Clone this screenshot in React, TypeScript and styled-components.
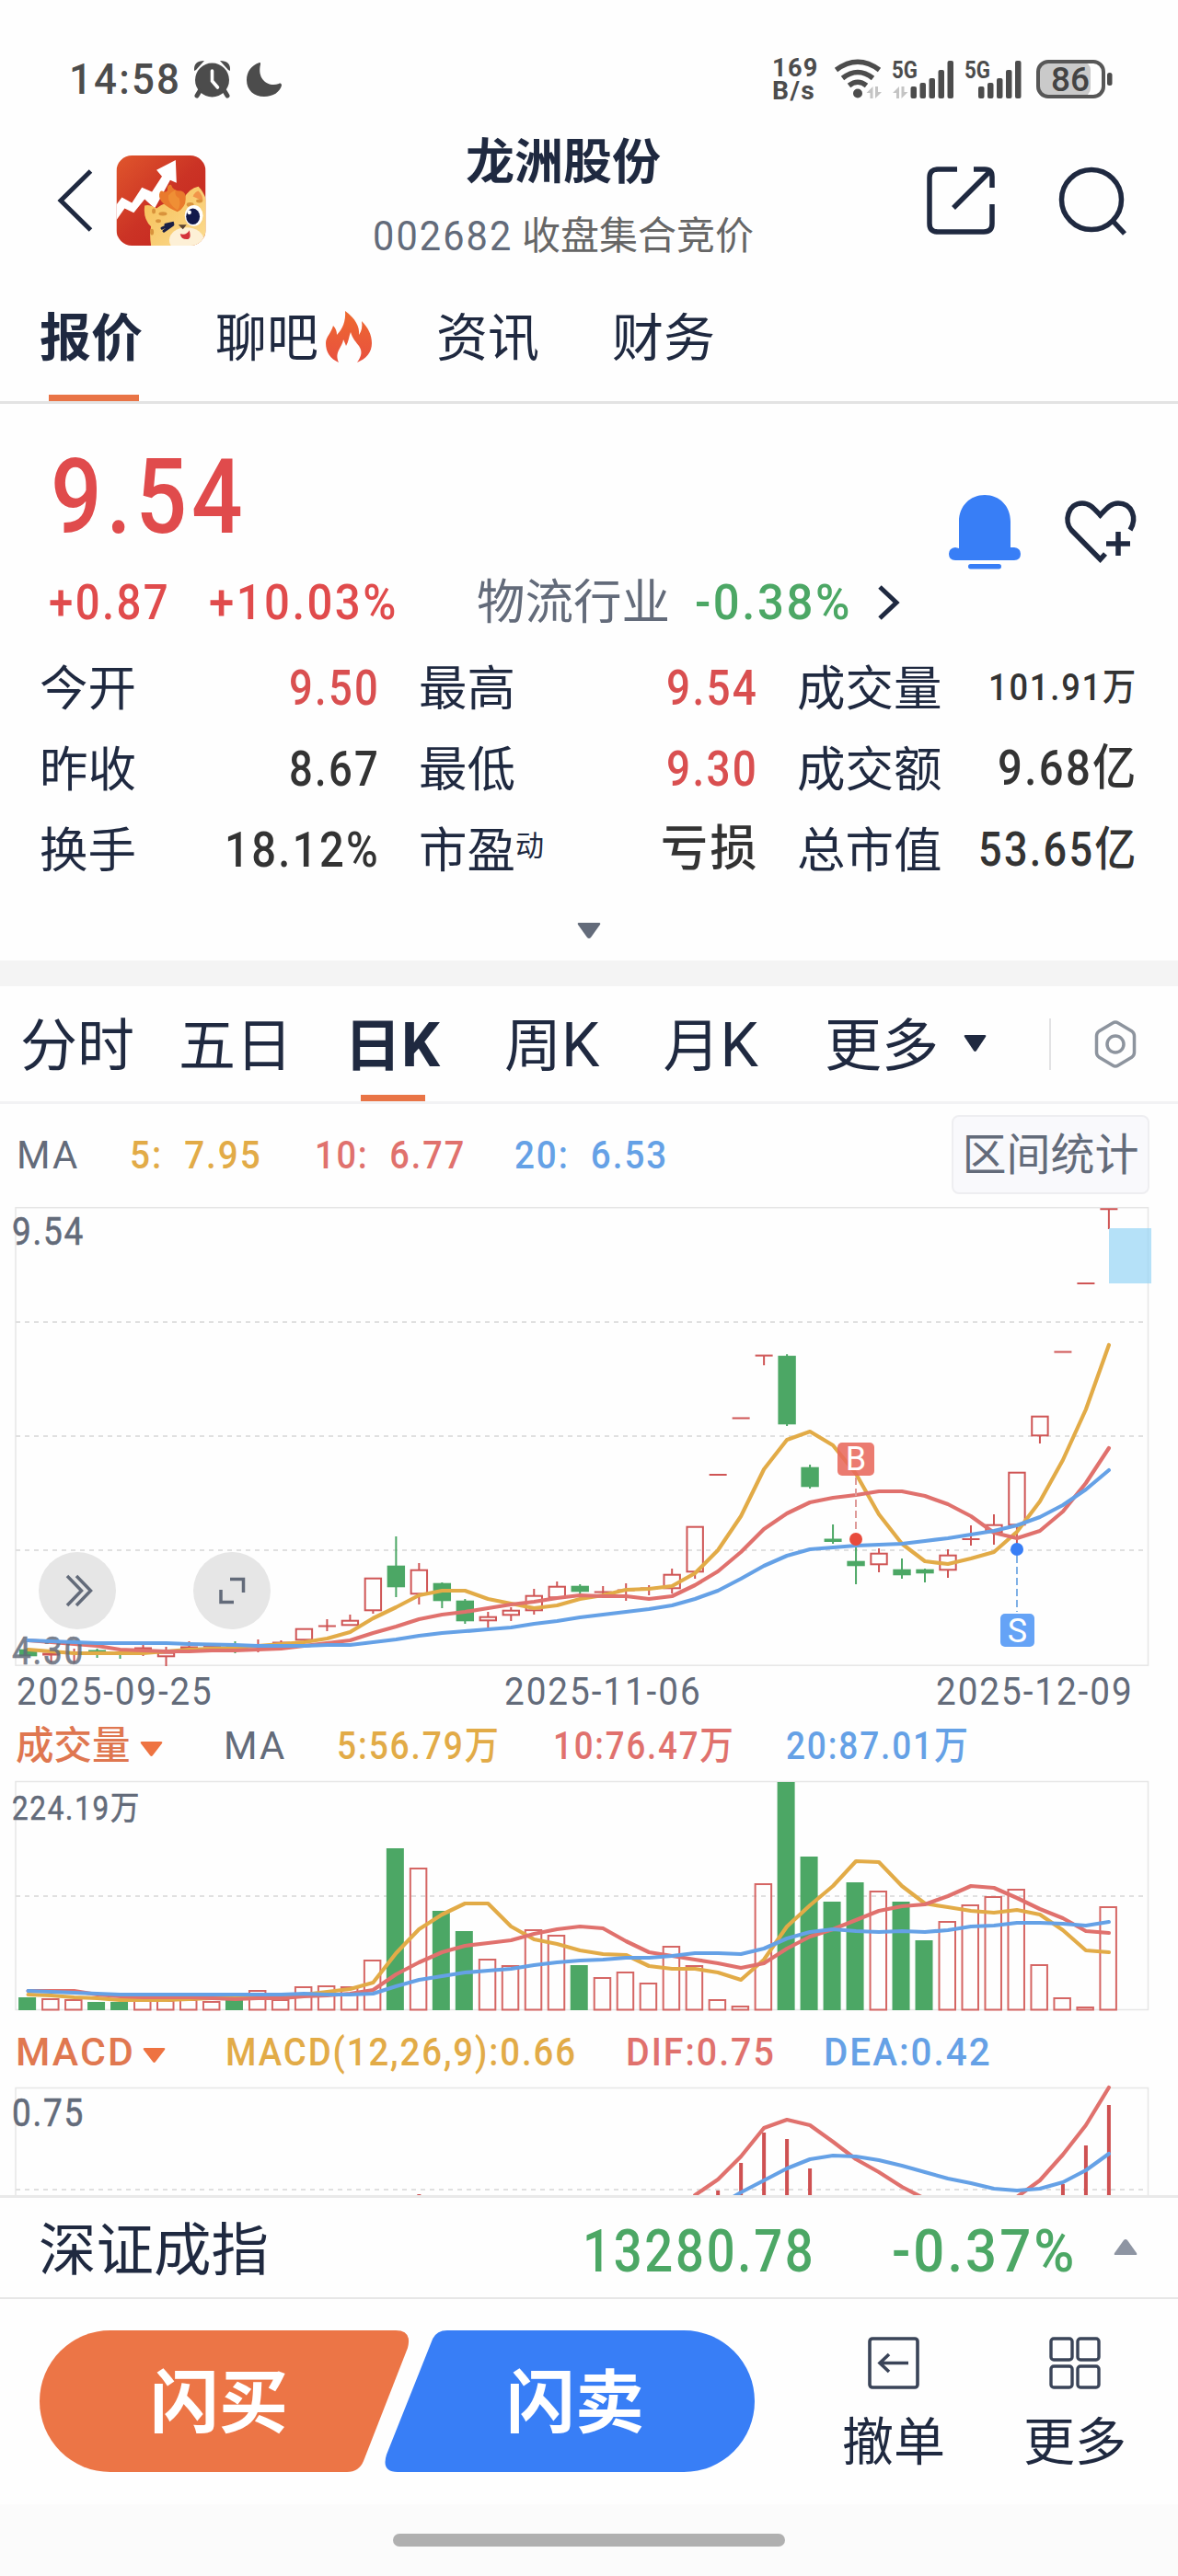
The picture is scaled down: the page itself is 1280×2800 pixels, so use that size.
import React, { useLayoutEffect, useRef, useState } from 'react';
import styled, { createGlobalStyle } from 'styled-components';

const INK = '#1f2940';
const SLATE = '#636b7a';
const RED = '#e04b4c';
const GREEN = '#4ca765';
const ORANGE = '#ec7546';
const BLUE = '#387ef6';
const MA_YELLOW = '#e2ab47';
const MA_RED = '#e0716d';
const MA_BLUE = '#65a1e6';

const GlobalStyle = createGlobalStyle`
  * {
    box-sizing: border-box;
  }

  body {
    margin: 0;
    background: #fefefe;
    color: ${INK};
    font-family: Roboto, 'Noto Sans CJK SC', sans-serif;
  }

  svg {
    display: block;
    flex-shrink: 0;
    overflow: visible;
  }
`;

const Page = styled.div`
  width: 1280px;
  height: 2800px;
  overflow: hidden;
  display: flex;
  flex-direction: column;
  background: #fefefe;

  > * {
    flex-shrink: 0;
  }
`;

const Row = styled.div<{ $h: number; $pt?: number }>`
  display: flex;
  align-items: center;
  height: ${(p) => p.$h}px;
  padding-top: ${(p) => p.$pt || 0}px;
`;

type TextProps = { $size: number; $color?: string; $ml?: number; $weight?: number };

const Text = styled.span<TextProps>`
  margin-left: ${(p) => p.$ml || 0}px;
  font-size: ${(p) => p.$size}px;
  font-weight: ${(p) => p.$weight || 400};
  color: ${(p) => p.$color || INK};
  line-height: 1.2;
  white-space: pre;
`;

const TRACKING = 0.05;

const FigureBox = styled(Text)<{ $w: number }>`
  display: block;
  width: ${(p) => p.$w}px;
  flex-shrink: 0;
`;

const FigureInner = styled.span`
  display: inline-block;
  letter-spacing: ${TRACKING}em;
  transform-origin: left center;
`;

type FigureProps = {
  w: number;
  size: number;
  color?: string;
  ml?: number;
  weight?: number;
  children: string;
};

// Quote figures are condensed so that each one fills its column exactly
const Figure: React.FC<FigureProps> = ({ w, size, color, ml, weight = 500, children }) => {
  const ref = useRef<HTMLSpanElement>(null);
  const [scale, setScale] = useState(1);

  useLayoutEffect(() => {
    if (ref.current) {
      setScale(w / (ref.current.offsetWidth - size * TRACKING));
    }
  }, [w, size, children]);

  return (
    <FigureBox $w={w} $size={size} $color={color} $ml={ml} $weight={weight}>
      <FigureInner ref={ref} style={{ transform: `scaleX(${scale})` }}>{children}</FigureInner>
    </FigureBox>
  );
};

/* ---------- status bar ---------- */

const NetSpeed = styled.div`
  width: 50px;
  margin-left: 532px;

  span {
    line-height: 25px;
  }
`;

const StatusBar = () => (
  <Row $h={134} $pt={38}>
    <Figure w={120} size={47} ml={75} color="#4c4c4c">14:58</Figure>
    <svg width="41" height="42" viewBox="0 0 41 42" style={{ marginLeft: 15 }}>
      <circle cx="20.500" cy="22" r="18.500" fill="#4c4c4c" />
      <path d="M1 12Q0 1 12 1L3 11M40 12Q41 1 29 1L38 11" fill="#4c4c4c" />
      <path d="M7 34l-3 5M34 34l3 5" stroke="#4c4c4c" strokeWidth="5" strokeLinecap="round" />
      <path d="M20.500 12v11l6 7" stroke="#fff" strokeWidth="3.600" fill="none" strokeLinecap="round" />
    </svg>
    <svg width="39" height="39" viewBox="0 0 39 39" style={{ marginLeft: 17 }}>
      <path d="M14 1C5 4 0 11 0 20C0 31 8 38 19 38C29 38 36 33 38 26C38 24 37 23 35 24C24 28 11 20 15 3C15 1 15 1 14 1Z" fill="#4c4c4c" />
    </svg>
    <NetSpeed>
      <Figure w={49} size={28} weight={700} color="#4c4c4c">169</Figure>
      <Figure w={46} size={28} weight={700} color="#4c4c4c">B/s</Figure>
    </NetSpeed>
    <svg width="320" height="60" viewBox="905 56 320 60" style={{ marginLeft: 17 }}>
      <g fill="none" stroke="#4c4c4c" strokeWidth="5.500">
        <path d="M907.500 76Q931 58.500 954.500 76" />
        <path d="M914.500 85Q931 72 947.500 85" />
        <path d="M921.500 93Q931 85.500 940.500 93" />
      </g>
      <circle cx="931" cy="101.500" r="5" fill="#4c4c4c" />
      <g fill="#c4c4c4">
        <path d="M947.500 94v13h-3v-6h-4zM950 107v-13h3v6h4z" />
        <path d="M976 94v13h-3v-6h-4zM978.500 107v-13h3v6h4z" />
      </g>
      <g fill="#4c4c4c">
        <rect x="988.500" y="94" width="6.500" height="13" rx="2" />
        <rect x="998.500" y="90" width="6.500" height="17" rx="2" />
        <rect x="1008.500" y="85" width="6.500" height="22" rx="2" />
        <rect x="1018.500" y="76" width="6.500" height="31" rx="2" />
        <rect x="1028.500" y="66" width="6.500" height="41" rx="2" />
        <rect x="1062" y="94" width="6.500" height="13" rx="2" />
        <rect x="1072" y="90" width="6.500" height="17" rx="2" />
        <rect x="1082" y="85" width="6.500" height="22" rx="2" />
        <rect x="1092" y="76" width="6.500" height="31" rx="2" />
        <rect x="1102" y="66" width="6.500" height="41" rx="2" />
        <rect x="1202" y="79" width="5.500" height="14" rx="2.500" />
        <text x="968" y="85" fontSize="26" fontWeight="700" textLength="28" lengthAdjust="spacingAndGlyphs">5G</text>
        <text x="1047" y="85" fontSize="26" fontWeight="700" textLength="28" lengthAdjust="spacingAndGlyphs">5G</text>
      </g>
      <rect x="1127" y="67" width="57" height="38" rx="9" fill="#cacaca" />
      <rect x="1127" y="67" width="71" height="38" rx="11" fill="none" stroke="#575757" strokeWidth="4" />
      <text x="1141" y="99" fontSize="37" fontWeight="500" fill="#444" textLength="42" lengthAdjust="spacingAndGlyphs">86</text>
    </svg>
  </Row>
);

/* ---------- header ---------- */

const Logo = () => (
  <svg width="98" height="98" viewBox="0 0 98 99" style={{ marginLeft: 24 }}>
    <defs>
      <linearGradient id="logoBg" x1="0" y1="0" x2="1" y2="1">
        <stop offset="0" stopColor="#e0562c" />
        <stop offset="0.500" stopColor="#cb3325" />
        <stop offset="1" stopColor="#c4241f" />
      </linearGradient>
      <linearGradient id="logoFur" x1="0" y1="0" x2="1" y2="1">
        <stop offset="0" stopColor="#f6bd52" />
        <stop offset="1" stopColor="#fbdc92" />
      </linearGradient>
      <clipPath id="logoClip"><rect width="98" height="99" rx="17" /></clipPath>
    </defs>
    <g clipPath="url(#logoClip)">
      <rect width="98" height="99" fill="url(#logoBg)" />
      <path d="M0 54L6 46L17 52L28 35L39 40L50 23L44 16L65 5L66 30L59 27L42 58L31 48L19 63L9 58L0 71Z" fill="#fff" />
      <path d="M31 55Q36 53 44 58Q52 51 74 47Q80 36 90 34Q96 40 99 50V99H38Q36 86 38 78Q29 70 31 55Z" fill="url(#logoFur)" />
      <path d="M84 45Q86 40 90 39Q95 44 95 50Z" fill="#f1954a" />
      <path d="M67 62Q46 53 47 43Q48 37 52 40Q57 40 56 36Q56 32 60 32Q62 39 71 39Q77 41 76 48Q76 57 67 62Z" fill="#e97a2c" />
      <path d="M57 44Q60 40 65 38Q63 44 69 47Q71 56 67 60Q56 53 57 44Z" fill="#ef8f35" />
      <g fill="#d9933c">
        <ellipse cx="41" cy="61" rx="2" ry="3" />
        <ellipse cx="51" cy="64" rx="4.500" ry="2.200" />
        <ellipse cx="81" cy="54" rx="4" ry="2.500" />
        <ellipse cx="91" cy="50" rx="3.500" ry="2" />
        <ellipse cx="46" cy="72" rx="3" ry="2" />
        <ellipse cx="39" cy="84" rx="2" ry="3.500" />
      </g>
      <ellipse cx="77" cy="93" rx="19" ry="14" fill="#fdf0d6" />
      <ellipse cx="85" cy="66" rx="10" ry="11.500" fill="#fff" />
      <ellipse cx="84" cy="67" rx="7.500" ry="8.800" fill="#12194a" />
      <circle cx="80" cy="62.500" r="2.300" fill="#fff" />
      <path d="M50 80L63 74L54 76M52 83L62 76" stroke="#1a1f45" strokeWidth="3" fill="none" strokeLinecap="round" />
      <path d="M68 76h9l-4 5z" fill="#5b4434" />
      <path d="M70 86Q77 88 80 82Q83 92 77 92Q71 92 70 86Z" fill="#d4323a" />
    </g>
  </svg>
);

const TitleBlock = styled.div`
  display: flex;
  flex-direction: column;
  align-items: center;
  width: 420px;
  margin: -6px 0 0 178px;
`;

const Header = () => (
  <Row $h={168}>
    <svg width="40" height="70" viewBox="0 0 40 70" style={{ marginLeft: 62 }}>
      <path d="M36.500 3L4 35L36.500 67" fill="none" stroke={INK} strokeWidth="5" />
    </svg>
    <Logo />
    <TitleBlock>
      <Row $h={84}>
        <Text $size={53} $weight={700}>龙洲股份</Text>
      </Row>
      <Row $h={74}>
        <Figure w={150} size={45} weight={400} color={SLATE}>002682</Figure>
        <Text $size={42} $color="#666" $ml={12}>收盘集合竞价</Text>
      </Row>
    </TitleBlock>
    <svg width="76" height="76" viewBox="0 0 76 76" style={{ marginLeft: 184 }}>
      <g fill="none" stroke={INK} strokeWidth="5.500">
        <path d="M34 4H13Q4 4 4 13V63Q4 72 13 72H63Q72 72 72 63V42" />
        <path d="M52 4H64Q72 4 72 12V24" />
        <path d="M69 7L30 46" />
      </g>
    </svg>
    <svg width="76" height="76" viewBox="0 0 76 76" style={{ marginLeft: 68 }}>
      <circle cx="36" cy="37" r="32.500" fill="none" stroke={INK} strokeWidth="5.500" />
      <path d="M59 60L72 74" stroke={INK} strokeWidth="5.500" />
    </svg>
  </Row>
);

/* ---------- section tabs ---------- */

const Tabs = styled.nav<{ $h: number; $line: string }>`
  display: flex;
  height: ${(p) => p.$h}px;
  border-bottom: 3px solid ${(p) => p.$line};
`;

type TabProps = { $ml: number; $size: number; $drop?: number; $active?: boolean; $bar?: number; $shift?: number };

const Tab = styled.div<TabProps>`
  position: relative;
  display: flex;
  align-items: center;
  margin-left: ${(p) => p.$ml}px;
  padding-top: ${(p) => p.$drop || 0}px;
  font-size: ${(p) => p.$size}px;
  font-weight: ${(p) => (p.$active ? 700 : 400)};
  line-height: 1.2;
  white-space: nowrap;

  &::after {
    content: '';
    display: ${(p) => (p.$active ? 'block' : 'none')};
    position: absolute;
    bottom: 0;
    left: calc(50% + ${(p) => p.$shift || 0}px);
    width: ${(p) => p.$bar || 0}px;
    height: 7px;
    transform: translateX(-50%);
    background: #e97446;
  }
`;

const Flame = () => (
  <svg width="50" height="56" viewBox="0 0 50 56" style={{ marginLeft: 8, marginTop: -7 }}>
    <defs>
      <linearGradient id="flame" x1="0" y1="0" x2="0" y2="1">
        <stop offset="0" stopColor="#ee6a2f" />
        <stop offset="1" stopColor="#e8503f" />
      </linearGradient>
    </defs>
    <path
      d="M21 0C32 8 37 17 36 26C39 22 40 17 39 11C46 18 50 26 50 35C50 45 44 52 34 56C39 49 40 44 36 38C33 34 29 30 27 23C25 28 25 33 22 38C21 35 20 33 19 31C18 40 9 44 14 56C5 52 0 45 0 35C0 28 6 24 8 16C11 19 12 22 12 26C18 20 22 11 21 0Z"
      fill="url(#flame)"
    />
  </svg>
);

const SectionTabs = () => (
  <Tabs $h={137} $line="#e3e3e3">
    <Tab $ml={43} $size={56} $active $bar={98} $shift={3}>报价</Tab>
    <Tab $ml={79} $size={56}>聊吧<Flame /></Tab>
    <Tab $ml={70} $size={56}>资讯</Tab>
    <Tab $ml={79} $size={56}>财务</Tab>
  </Tabs>
);

/* ---------- quote ---------- */

const PriceRow = styled.div`
  display: flex;
  align-items: flex-start;
  height: 175px;
  padding-top: 34px;
`;

const StatGrid = styled.div`
  display: grid;
  grid-template-columns: 368px 367px 368px;
  column-gap: 44px;
  grid-auto-rows: 88px;
  padding: 8px 0 0 43px;
`;

const Stat = styled.div`
  display: flex;
  align-items: center;
  justify-content: space-between;
`;

const StatLabel = styled(Text)`
  padding-top: 3px;
`;

const Sup = styled.span`
  font-size: 31px;
  vertical-align: 13px;
  line-height: 1;
`;

type StatItem = { label: string; sup?: string; value: string; w: number; size: number; up?: boolean };

const stats: StatItem[] = [
  { label: '今开', value: '9.50', w: 97, size: 54, up: true },
  { label: '最高', value: '9.54', w: 98, size: 54, up: true },
  { label: '成交量', value: '101.91万', w: 160, size: 41 },
  { label: '昨收', value: '8.67', w: 97, size: 54 },
  { label: '最低', value: '9.30', w: 98, size: 54, up: true },
  { label: '成交额', value: '9.68亿', w: 150, size: 53 },
  { label: '换手', value: '18.12%', w: 167, size: 54 },
  { label: '市盈', sup: '动', value: '亏损', w: 104, size: 53 },
  { label: '总市值', value: '53.65亿', w: 171, size: 51 },
];

const Quote = () => (
  <>
    <PriceRow>
      <Figure w={209} size={113} ml={55} color={RED}>9.54</Figure>
      <svg width="78" height="80" viewBox="0 0 78 80" style={{ marginLeft: 767, marginTop: 65 }}>
        <path d="M11 58V29C11 12 23 0 39 0S67 12 67 29V57H71Q78 58 78 64Q78 71 71 71H7Q0 71 0 64Q0 58 7 57Z" fill={BLUE} />
        <rect x="21" y="75" width="36" height="5.500" rx="2.700" fill={BLUE} />
      </svg>
      <svg width="80" height="70" viewBox="0 0 80 70" style={{ marginLeft: 47, marginTop: 70 }}>
        <g fill="none" stroke={INK} strokeWidth="5.500">
          <path d="M45 59L39.500 65L8 33C0 24 4 4 20 4C28 4 32 9 39.500 17C47 9 51 4 59 4C74 4 80 20 72 33" />
          <path d="M46 48H72M59 35V61" />
        </g>
      </svg>
    </PriceRow>
    <Row $h={82}>
      <Figure w={130} size={54} ml={53} color={RED}>+0.87</Figure>
      <Figure w={203} size={54} ml={44} color={RED}>+10.03%</Figure>
      <Text $size={52.5} $ml={88} $color={SLATE}>物流行业</Text>
      <Figure w={168} size={54} ml={27} color={GREEN}>-0.38%</Figure>
      <svg width="26" height="42" viewBox="0 0 26 42" style={{ marginLeft: 30 }}>
        <path d="M3 4L21 21L3 38" fill="none" stroke={INK} strokeWidth="5" />
      </svg>
    </Row>
    <StatGrid>
      {stats.map((s) => (
        <Stat key={s.label}>
          <StatLabel $size={52.5}>{s.label}{s.sup && <Sup>{s.sup}</Sup>}</StatLabel>
          <Figure w={s.w} size={s.size} color={s.up ? '#d94f50' : '#333'}>{s.value}</Figure>
        </Stat>
      ))}
    </StatGrid>
    <Row $h={76}>
      <svg width="26" height="18" viewBox="0 0 26 18" style={{ marginLeft: 627, marginTop: 11 }}>
        <path d="M2 0H24Q26 0 25 2L15 16Q13 18 11 16L1 2Q0 0 2 0Z" fill={SLATE} />
      </svg>
    </Row>
  </>
);

const Band = styled.div`
  height: 28px;
  background: #f4f4f4;
`;

/* ---------- chart ---------- */

const BigK = styled.span`
  font-size: 66px;
  line-height: 1;
`;

const Divider = styled.i`
  width: 2px;
  height: 56px;
  margin: 35px 0 0 67px;
  background: #e2e2e4;
`;

const PeriodTabs = () => (
  <Tabs $h={128} $line="#f2f2f4">
    <Tab $ml={22} $size={62} $drop={7}>分时</Tab>
    <Tab $ml={48} $size={62} $drop={7}>五日</Tab>
    <Tab $ml={56} $size={62} $drop={7} $active $bar={70} $shift={1}><span>日<BigK>K</BigK></span></Tab>
    <Tab $ml={70} $size={62} $drop={7}><span>周<BigK>K</BigK></span></Tab>
    <Tab $ml={69} $size={62} $drop={7}><span>月<BigK>K</BigK></span></Tab>
    <Tab $ml={72} $size={62} $drop={7}>
      更多
      <svg width="26" height="20" viewBox="0 0 26 20" style={{ marginLeft: 27, marginTop: -6 }}>
        <path d="M2 0H23Q25 0 24 2L14 17Q12.500 19 11 17L1 2Q0 0 2 0Z" fill={INK} />
      </svg>
    </Tab>
    <Divider />
    <svg width="46" height="61" viewBox="0 0 46 61" style={{ marginLeft: 47, marginTop: 32 }}>
      <path d="M20 8Q23 6 26 8L41 17Q43.500 19 43.500 22V40Q43.500 43 41 45L26 54Q23 56 20 54L5 45Q2.500 43 2.500 40V22Q2.500 19 5 17Z" fill="none" stroke="#8d949e" strokeWidth="3.500" />
      <circle cx="23" cy="31" r="9" fill="none" stroke="#8d949e" strokeWidth="3.500" />
    </svg>
  </Tabs>
);

const RangeButton = styled.button`
  width: 215px;
  height: 86px;
  margin: -3px 0 0 310px;
  padding: 0 0 7px;
  border: 2px solid #eeeef1;
  border-radius: 8px;
  background: #f9f9fc;
  color: ${SLATE};
  font: 400 48px Roboto, 'Noto Sans CJK SC', sans-serif;
`;

const X0 = 30.6;
const STEP = 24.985;
const cx = (i: number) => X0 + i * STEP;
const points = (ys: number[], from = 0) => ys.map((y, i) => `${cx(i + from).toFixed(1)},${y}`).join(' ');

// [direction, high, body top, body bottom, low]
type Candle = ['u' | 'd', number, number, number, number];

const candles: Candle[] = [
  ['d', 1793, 1793, 1800, 1800], ['u', 1797, 1797, 1799, 1807], ['u', 1792, 1796, 1797, 1808],
  ['d', 1792, 1794, 1796, 1802], ['d', 1796, 1796, 1797, 1803], ['u', 1788, 1791, 1793, 1800],
  ['u', 1790, 1796, 1801, 1811], ['u', 1784, 1790, 1792, 1792], ['u', 1788, 1789, 1790, 1790],
  ['d', 1784, 1789, 1791, 1797], ['u', 1782, 1788, 1789, 1796], ['u', 1783, 1785, 1787, 1787],
  ['u', 1770, 1770, 1783, 1783], ['u', 1760, 1767, 1768, 1773], ['u', 1755, 1761, 1767, 1767],
  ['u', 1715, 1715, 1751, 1754], ['d', 1670, 1702, 1725, 1736], ['u', 1699, 1706, 1733, 1744],
  ['d', 1720, 1721, 1740, 1748], ['d', 1738, 1740, 1762, 1765], ['u', 1752, 1757, 1762, 1769],
  ['u', 1747, 1750, 1756, 1762], ['u', 1727, 1734, 1751, 1755], ['u', 1719, 1724, 1737, 1737],
  ['d', 1722, 1724, 1730, 1736], ['u', 1724, 1730, 1731, 1735], ['u', 1721, 1728, 1729, 1740],
  ['u', 1723, 1726, 1727, 1734], ['u', 1705, 1711, 1727, 1732], ['u', 1659, 1659, 1709, 1716],
  ['u', 1603, 1603, 1603, 1603], ['u', 1541.5, 1541.5, 1541.5, 1541.5], ['u', 1473.5, 1473.5, 1473.5, 1484],
  ['d', 1472, 1474, 1548, 1550], ['d', 1592, 1595, 1616, 1618], ['d', 1657, 1673, 1675.5, 1678],
  ['d', 1675, 1697, 1702, 1722], ['u', 1683, 1688, 1701, 1709], ['d', 1694, 1706, 1712, 1716],
  ['d', 1705, 1706, 1710, 1720], ['u', 1684, 1690, 1707, 1715], ['u', 1658, 1673, 1673, 1680],
  ['u', 1646, 1657, 1666, 1679], ['u', 1600, 1600, 1658, 1686], ['u', 1539, 1539, 1561, 1569],
  ['u', 1469.5, 1469.5, 1469.5, 1469.5], ['u', 1395, 1395, 1395, 1395], ['u', 1314, 1314, 1314.5, 1336],
];

const ma5 = [
  1793, 1795, 1797, 1797, 1797, 1797, 1795, 1793, 1792, 1791, 1789, 1787, 1785, 1781, 1774, 1759,
  1747, 1734, 1729, 1729, 1738, 1743, 1748, 1745, 1738, 1734, 1728, 1727, 1724, 1710, 1685, 1648,
  1597, 1565, 1556, 1571, 1602, 1646, 1678, 1697, 1700, 1694, 1687, 1665, 1632, 1587, 1532, 1462,
];
const ma10 = [
  1783, 1785, 1787, 1789, 1793, 1794, 1795, 1795, 1794, 1794, 1793, 1792, 1789, 1786, 1783, 1775,
  1768, 1760, 1755, 1752, 1748, 1744, 1741, 1737, 1734, 1735, 1735, 1738, 1735, 1723, 1708, 1687,
  1662, 1645, 1633, 1628, 1625, 1621, 1621, 1626, 1635, 1648, 1666, 1672, 1664, 1643, 1612, 1574,
];
const ma20 = [
  1783, 1784, 1785, 1786, 1786, 1786, 1786, 1787, 1787.5, 1788, 1789, 1789, 1789, 1788, 1788, 1785,
  1782, 1778, 1775, 1773, 1771, 1769, 1765, 1762, 1758, 1755, 1752, 1749, 1745, 1738, 1729, 1716,
  1702, 1691, 1684, 1682, 1680, 1679, 1678, 1675, 1672, 1668, 1664, 1658, 1649, 1636, 1619, 1598,
];

const downVolumes = [0, 3, 4, 9, 16, 18, 19, 24, 33, 34, 35, 36, 38, 39];
const volumes = [
  2171, 2172, 2173, 2176, 2176, 2174, 2174, 2173, 2175, 2173, 2163, 2173, 2159, 2158, 2159, 2130,
  2009, 2030, 2077, 2099, 2129, 2136, 2097, 2103, 2136, 2149, 2143, 2155, 2115, 2136, 2173, 2180,
  2047, 1937, 2018, 2067, 2046, 2055, 2067, 2109, 2088, 2070, 2061, 2053, 2135, 2171, 2181, 2072,
];
const vol5 = [
  2168, 2169, 2171, 2172, 2174, 2174, 2174, 2173, 2172, 2172, 2171, 2170, 2168, 2165, 2162, 2155,
  2123, 2097, 2081, 2069, 2069, 2094, 2108, 2113, 2120, 2124, 2125, 2137, 2140, 2140, 2144, 2152,
  2130, 2094, 2071, 2050, 2023, 2024, 2050, 2069, 2073, 2077, 2079, 2076, 2081, 2098, 2120, 2122,
];
const vol10 = [
  2164, 2164, 2164, 2168, 2170, 2171, 2171, 2171, 2172, 2173, 2172, 2172, 2170, 2169, 2167, 2163,
  2146, 2133, 2122, 2115, 2112, 2109, 2102, 2097, 2094, 2096, 2110, 2122, 2126, 2130, 2134, 2139,
  2134, 2118, 2105, 2097, 2087, 2077, 2072, 2070, 2061, 2050, 2052, 2063, 2075, 2085, 2099, 2101,
];
const vol20 = [
  2164, 2165, 2166, 2167, 2168, 2168, 2168, 2168, 2168, 2168, 2168, 2168, 2167, 2168, 2168, 2167,
  2159, 2152, 2148, 2144, 2142, 2140, 2136, 2133, 2131, 2130, 2128, 2128, 2126, 2123, 2123, 2124,
  2118, 2107, 2100, 2097, 2099, 2100, 2099, 2100, 2098, 2094, 2093, 2090, 2090, 2091, 2093, 2089,
];

const dif = [2386, 2369, 2344, 2313, 2304, 2310, 2328, 2347, 2361, 2377, 2390, 2404, 2412, 2406, 2388, 2370, 2342, 2310, 2269];
const dea = [2398, 2383, 2370, 2357, 2347, 2343, 2344, 2348, 2354, 2361, 2368, 2373, 2379, 2381, 2379, 2372, 2359, 2341];
const macdBars = [[17, 2385], [30, 2381], [31, 2351], [32, 2318], [33, 2325], [34, 2357], [45, 2374], [46, 2332], [47, 2288]];

const Frame: React.FC<{ y: number; h: number; lines: number[] }> = ({ y, h, lines }) => (
  <>
    <rect x="17" y={y} width="1230.500" height={h} fill="none" stroke="#e6e6e6" strokeWidth="1.500" />
    {lines.map((l) => (
      <path key={l} d={`M17 ${l}H1247`} stroke="#e0e0e0" strokeWidth="1.800" strokeDasharray="5 5" />
    ))}
  </>
);

const Line: React.FC<{ ys: number[]; color: string; from?: number }> = ({ ys, color, from }) => (
  <polyline points={points(ys, from)} fill="none" stroke={color} strokeWidth="4.200" strokeLinejoin="round" strokeLinecap="round" />
);

const Axis: React.FC<{ y: number; w: number; size?: number; children: string }> = ({ y, w, size = 42, children }) => (
  <text x="13" y={y} fontSize={size} fill={SLATE} stroke={SLATE} strokeWidth="0.600" letterSpacing="2" textLength={w} lengthAdjust="spacingAndGlyphs">
    {children}
  </text>
);

const PriceChart = () => (
  <svg width="1280" height="500" viewBox="0 1312 1280 500">
    <Frame y={1312.7} h={497.5} lines={[1437, 1561, 1685]} />
    <Axis y={1353} w={79}>9.54</Axis>
    {candles.map(([dir, high, top, bottom, low], i) => {
      const x = cx(i);
      const color = dir === 'u' ? '#cf5555' : GREEN;
      const flat = bottom - top < 3;

      return (
        <g key={i} stroke={color} strokeWidth="2">
          {high < top && <path d={`M${x} ${high}V${top}`} />}
          {low > bottom && <path d={`M${x} ${bottom}V${low}`} />}
          {flat && <path d={`M${x - 9.5} ${(top + bottom) / 2}h19`} strokeWidth={Math.max(2, bottom - top + 1)} />}
          {!flat && <rect x={x - 8.7} y={top + 0.7} width="17.400" height={bottom - top - 1.4} fill={dir === 'u' ? 'none' : color} />}
        </g>
      );
    })}
    <rect x="1205" y="1335" width="46" height="60" fill="#99d5f5" opacity="0.720" />
    <Line ys={ma5} color={MA_YELLOW} />
    <Line ys={ma10} color={MA_RED} />
    <g opacity="0.850">
      <Axis y={1808.5} w={79}>4.30</Axis>
    </g>
    <Line ys={ma20} color={MA_BLUE} />
    <path d="M930 1606V1666" stroke="#de9a98" strokeWidth="2" strokeDasharray="8 4" />
    <circle cx="930" cy="1673" r="7" fill="#e84b3c" />
    <rect x="910" y="1568" width="40" height="36" rx="5" fill="#e8695c" opacity="0.880" />
    <text x="930" y="1598" fontSize="36" fill="#fff" textAnchor="middle">B</text>
    <path d="M1105 1691V1752" stroke="#7fb0e6" strokeWidth="2" strokeDasharray="8 4" />
    <circle cx="1105" cy="1684" r="7" fill={BLUE} />
    <rect x="1087" y="1754" width="37" height="36" rx="5" fill="#65a3f6" />
    <text x="1105.500" y="1785" fontSize="36" fill="#fff" textAnchor="middle">S</text>
    <circle cx="84" cy="1729" r="42" fill="#e6e6e6" />
    <path d="M73 1713L88.500 1729L73 1745M83 1713L98.500 1729L83 1745" fill="none" stroke={SLATE} strokeWidth="3.500" />
    <circle cx="252" cy="1729" r="42" fill="#e6e6e6" />
    <path d="M250 1716.500H264.500V1731M240 1728V1741.500H254" fill="none" stroke={SLATE} strokeWidth="3.500" />
  </svg>
);

const VolumeChart = () => (
  <svg width="1280" height="264" viewBox="0 1928 1280 264">
    <Frame y={1936.5} h={248} lines={[2061]} />
    <Axis y={1978} w={140} size={36}>224.19万</Axis>
    {volumes.map((y, i) => (downVolumes.includes(i) ? (
      <rect key={i} x={cx(i) - 10.5} y={y} width="19" height={2185 - y} fill={GREEN} />
    ) : (
      <rect key={i} x={cx(i) - 9.5} y={y + 1} width="17.500" height={2183.5 - y} fill="none" stroke="#d56664" strokeWidth="2" />
    )))}
    <Line ys={vol5} color={MA_YELLOW} />
    <Line ys={vol10} color={MA_RED} />
    <Line ys={vol20} color={MA_BLUE} />
  </svg>
);

const MacdClip = styled.div`
  height: 122px;
  overflow: hidden;
`;

const MacdChart = () => (
  <MacdClip>
    <svg width="1280" height="122" viewBox="0 2264 1280 122">
      <Frame y={2269.5} h={220} lines={[2380]} />
      <Axis y={2311} w={79}>0.75</Axis>
      {macdBars.map(([i, y]) => (
        <path key={i} d={`M${cx(i)} ${y}V2400`} stroke="#ce5152" strokeWidth="4" />
      ))}
      <Line ys={dif} color={MA_RED} from={29} />
      <Line ys={dea} color={MA_BLUE} from={30} />
    </svg>
  </MacdClip>
);

const Caret = () => (
  <svg width="26" height="17" viewBox="0 0 26 17" style={{ marginLeft: 10, marginTop: 6 }}>
    <path d="M2 0H23Q25 0 24 2L14 15Q12.500 17 11 15L1 2Q0 0 2 0Z" fill="#ee7341" />
  </svg>
);

const Charts = () => (
  <>
    <Row $h={112}>
      <Figure w={66} size={43} ml={18} weight={400} color={SLATE}>MA</Figure>
      <Figure w={142} size={43} ml={57} color={MA_YELLOW}>5:  7.95</Figure>
      <Figure w={162} size={43} ml={59} color={MA_RED}>10:  6.77</Figure>
      <Figure w={165} size={43} ml={55} color={MA_BLUE}>20:  6.53</Figure>
      <RangeButton>区间统计</RangeButton>
    </Row>
    <PriceChart />
    <Row $h={54}>
      <Figure w={212} size={43} ml={18} weight={400} color={SLATE}>2025-09-25</Figure>
      <Figure w={213} size={43} ml={318} weight={400} color={SLATE}>2025-11-06</Figure>
      <Figure w={213} size={43} ml={256} weight={400} color={SLATE}>2025-12-09</Figure>
    </Row>
    <Row $h={62} $pt={2}>
      <Text $size={41.5} $ml={17} $weight={500} $color="#df7750">成交量</Text>
      <Caret />
      <Figure w={66} size={43} ml={65} weight={400} color={SLATE}>MA</Figure>
      <Figure w={176} size={42} ml={57} color={MA_YELLOW}>5:56.79万</Figure>
      <Figure w={196} size={42} ml={59} color={MA_RED}>10:76.47万</Figure>
      <Figure w={198} size={42} ml={57} color={MA_BLUE}>20:87.01万</Figure>
    </Row>
    <VolumeChart />
    <Row $h={72} $pt={6}>
      <Figure w={128} size={43} ml={17} color="#e07850">MACD</Figure>
      <Caret />
      <Figure w={380} size={43} ml={64} color={MA_YELLOW}>MACD(12,26,9):0.66</Figure>
      <Figure w={161} size={43} ml={55} color={MA_RED}>DIF:0.75</Figure>
      <Figure w={181} size={43} ml={54} color={MA_BLUE}>DEA:0.42</Figure>
    </Row>
    <MacdChart />
  </>
);

/* ---------- bottom ---------- */

const IndexBar = styled.div`
  display: flex;
  align-items: center;
  height: 113px;
  border-top: 3px solid #e9e9e9;
  border-bottom: 2px solid #e6e6e6;
  padding-top: 7px;
`;

const Trade = styled.div`
  display: flex;
  align-items: flex-start;
  height: 223px;
  padding: 34px 0 0 43px;
`;

const TradeButton = styled.div<{ $ml?: number; $pad: number }>`
  display: grid;
  align-items: center;
  width: 402px;
  height: 154px;
  margin-left: ${(p) => p.$ml || 0}px;
  color: #fff;
  font-size: 75px;
  font-weight: 700;
  line-height: 88px;

  > * {
    grid-area: 1 / 1;
  }

  span {
    padding: 4px 0 0 ${(p) => p.$pad}px;
  }
`;

const Action = styled.div<{ $ml: number }>`
  display: flex;
  flex-direction: column;
  align-items: center;
  gap: 25px;
  margin: 7px 0 0 ${(p) => p.$ml}px;
  font-size: 56px;
  line-height: 66px;
`;

const Home = styled.div`
  display: flex;
  justify-content: center;
  height: 78px;
  padding-top: 32px;
  background: #fbfbfb;

  i {
    width: 426px;
    height: 14px;
    border-radius: 7px;
    background: #b0b0b0;
  }
`;

const Bottom = () => (
  <>
    <IndexBar>
      <Text $size={62.5} $ml={42}>深证成指</Text>
      <Figure w={251} size={65} ml={341} color={GREEN}>13280.78</Figure>
      <Figure w={198} size={65} ml={85} color={GREEN}>-0.37%</Figure>
      <svg width="26" height="18" viewBox="0 0 26 18" style={{ marginLeft: 43, marginTop: -8 }}>
        <path d="M2 17H24Q26 17 25 15L15 1Q13 -1 11 1L1 15Q0 17 2 17Z" fill="#8e95a3" />
      </svg>
    </IndexBar>
    <Trade>
      <TradeButton $pad={120}>
        <svg width="402" height="154" viewBox="0 0 402 154">
          <path d="M77 0H387Q405 0 400 19L352 142Q347 154 334 154H77A77 77 0 0 1 77 0Z" fill={ORANGE} />
        </svg>
        <span>闪买</span>
      </TradeButton>
      <TradeButton $ml={-27} $pad={132}>
        <svg width="402" height="154" viewBox="0 0 402 154">
          <path d="M325 0H68Q55 0 51 12L2 135Q-4 154 14 154H325A77 77 0 0 0 325 0Z" fill={BLUE} />
        </svg>
        <span>闪卖</span>
      </TradeButton>
      <Action $ml={95}>
        <svg width="56" height="57" viewBox="0 0 56 57">
          <rect x="2" y="2" width="52" height="53" rx="3" fill="none" stroke="#3a4458" strokeWidth="3.600" />
          <path d="M13 28.500H44M23 19L13 28.500L23 38" fill="none" stroke="#3a4458" strokeWidth="3.600" />
        </svg>
        撤单
      </Action>
      <Action $ml={85}>
        <svg width="56" height="57" viewBox="0 0 56 57" fill="none" stroke="#3a4458" strokeWidth="3.400">
          <rect x="2" y="2" width="23" height="23" rx="3" />
          <rect x="31" y="2" width="23" height="23" rx="3" />
          <rect x="2" y="32" width="23" height="23" rx="3" />
          <rect x="31" y="32" width="23" height="23" rx="3" />
        </svg>
        更多
      </Action>
    </Trade>
    <Home><i /></Home>
  </>
);

export default function App() {
  return (
    <Page>
      <GlobalStyle />
      <StatusBar />
      <Header />
      <SectionTabs />
      <Quote />
      <Band />
      <PeriodTabs />
      <Charts />
      <Bottom />
    </Page>
  );
}
